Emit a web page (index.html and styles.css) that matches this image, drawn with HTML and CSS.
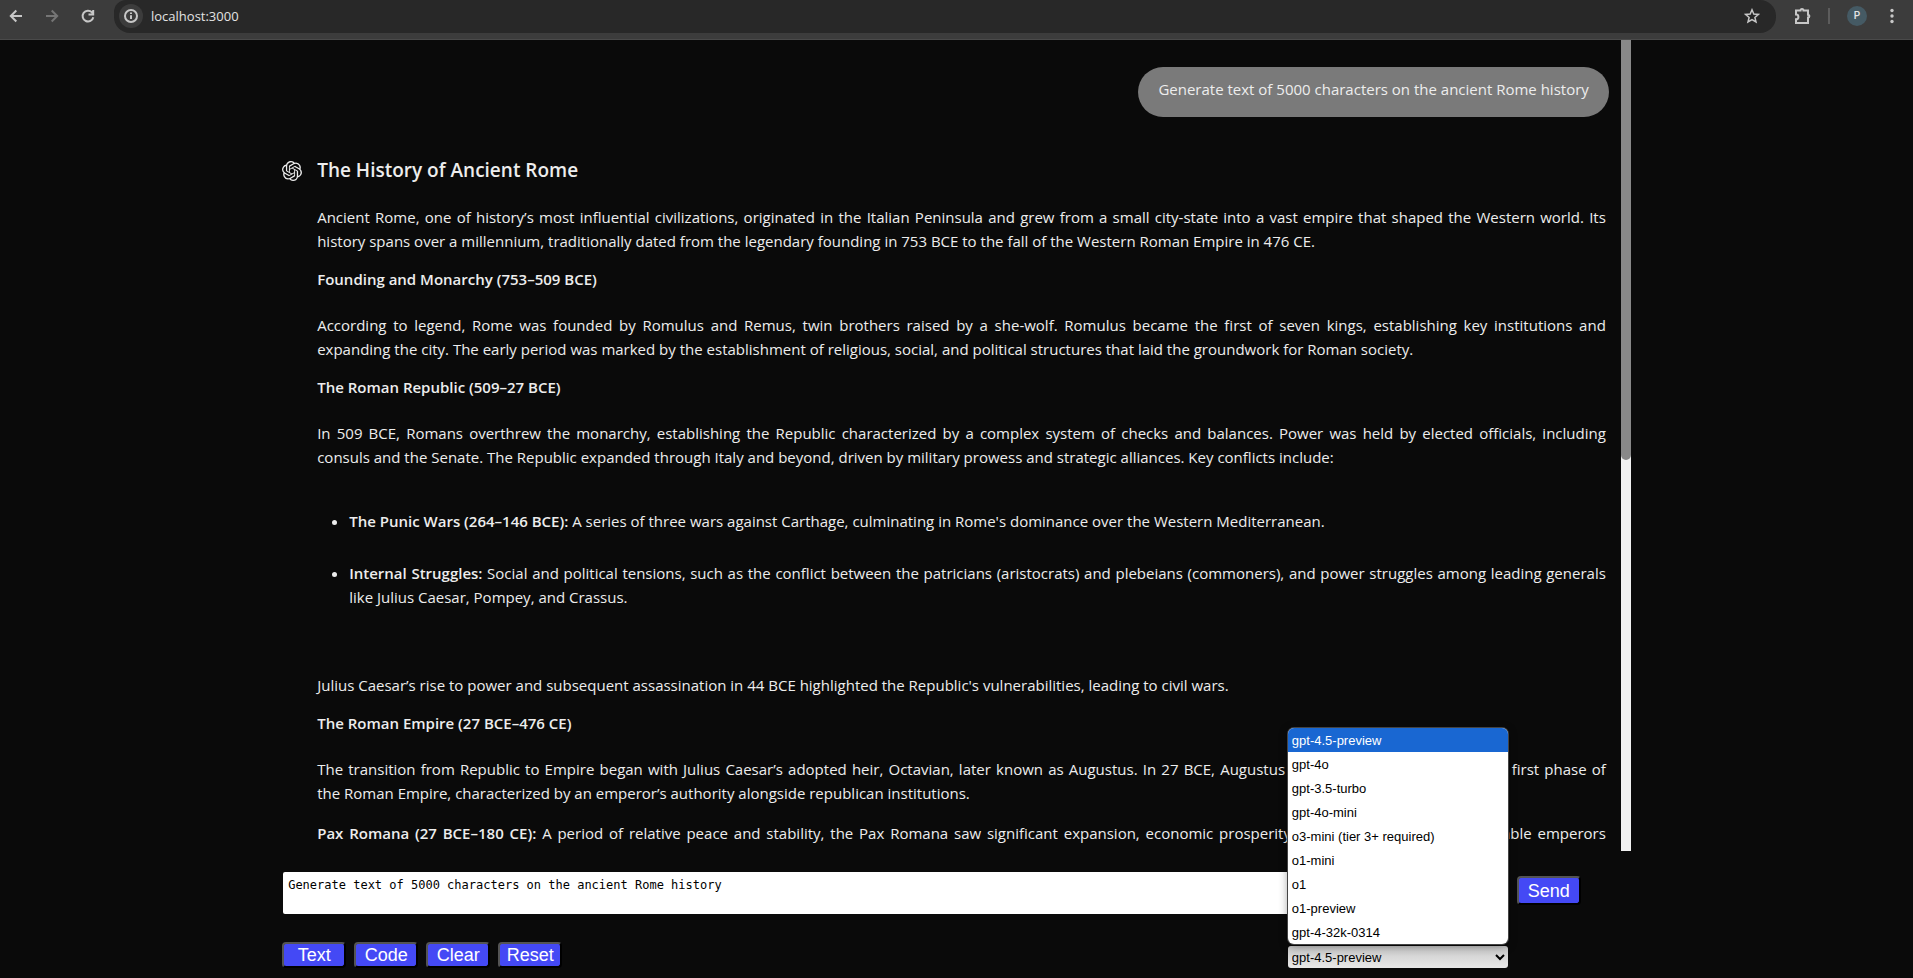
FILE: index.html
```html
<!DOCTYPE html>
<html lang="en">
<head>
<meta charset="utf-8">
<title>localhost:3000</title>
<link rel="stylesheet" href="styles.css">
</head>
<body>
<header class="toolbar">
  <nav class="nav-buttons" aria-label="Browser navigation">
    <button class="icon-button" aria-label="Back"><svg width="16" height="16" viewBox="0 0 16 16"><path d="M14 8H3M8.300 2.500 2.800 8l5.500 5.500"/></svg></button>
    <button class="icon-button disabled" aria-label="Forward" disabled><svg width="16" height="16" viewBox="0 0 16 16"><path d="M2 8h11M7.700 2.500 13.200 8l-5.500 5.500"/></svg></button>
    <button class="icon-button" aria-label="Reload"><svg width="16" height="16" viewBox="0 0 16 16"><path d="M13.300 9.200A5.400 5.400 0 1 1 12 4.400L13.200 6M13.200 2v4.500H8.500"/></svg></button>
  </nav>
  <div class="address-bar">
    <button class="site-info" aria-label="Site information"><svg width="16" height="16" viewBox="0 0 16 16"><circle cx="8" cy="8" r="6"/><path d="M8 7.200v3.800M8 4.600v1.500"/></svg></button>
    <input class="address" type="text" value="localhost:3000" aria-label="Address">
    <button class="icon-button" aria-label="Bookmark"><svg class="star" width="16" height="16" viewBox="0 0 16 16"><path d="M8 1.800 9.800 6l4.600.4-3.500 3 1.100 4.500L8 11.500l-4 2.400 1.100-4.500-3.500-3L6.200 6z"/></svg></button>
  </div>
  <div class="tools">
    <button class="icon-button" aria-label="Extensions"><svg width="18" height="18" viewBox="0 0 18 18"><path d="M3 3.500h4.500a1.500 1.500 0 0 1 3 0H15v4.300a1.300 1.300 0 0 1 0 2.700V16H3v-3.700a2.300 2.300 0 0 0 0-4.800z"/></svg></button>
    <span class="divider"></span>
    <button class="avatar" aria-label="Profile">P</button>
    <button class="icon-button" aria-label="Menu"><svg class="dots" width="16" height="16" viewBox="0 0 16 16"><circle cx="8" cy="2.500" r="1.700"/><circle cx="8" cy="8" r="1.700"/><circle cx="8" cy="13.500" r="1.700"/></svg></button>
  </div>
</header>
<main class="app">
  <section class="chat">
    <div class="messages">
      <div class="prompt">Generate text of 5000 characters on the ancient Rome history</div>
      <article class="answer">
        <svg class="logo" viewBox="0 0 24 24" width="20" height="20" aria-hidden="true"><path d="M22.282 9.821a5.985 5.985 0 0 0-.516-4.910 6.046 6.046 0 0 0-6.510-2.900A6.065 6.065 0 0 0 4.981 4.182a5.985 5.985 0 0 0-3.998 2.900 6.046 6.046 0 0 0 .743 7.097 5.980 5.980 0 0 0 .511 4.911 6.051 6.051 0 0 0 6.515 2.900A5.985 5.985 0 0 0 13.260 24a6.056 6.056 0 0 0 5.772-4.206 5.990 5.990 0 0 0 3.998-2.900 6.056 6.056 0 0 0-.748-7.073zm-9.022 12.608a4.476 4.476 0 0 1-2.876-1.041l.141-.080 4.779-2.758a.795.795 0 0 0 .393-.681v-6.737l2.020 1.169a.071.071 0 0 1 .038.052v5.583a4.504 4.504 0 0 1-4.495 4.493zM3.600 18.304a4.471 4.471 0 0 1-.535-3.014l.142.085 4.783 2.758a.771.771 0 0 0 .781 0l5.843-3.369v2.333a.080.080 0 0 1-.033.061L9.740 19.950a4.499 4.499 0 0 1-6.140-1.646zM2.341 7.896a4.485 4.485 0 0 1 2.366-1.973V11.600a.766.766 0 0 0 .388.676l5.815 3.355-2.020 1.169a.076.076 0 0 1-.071 0l-4.830-2.787A4.504 4.504 0 0 1 2.341 7.872zm16.597 3.856-5.833-3.388L15.119 7.200a.076.076 0 0 1 .071 0l4.830 2.791a4.494 4.494 0 0 1-.676 8.104v-5.677a.790.790 0 0 0-.406-.666zm2.010-3.024-.141-.085-4.774-2.782a.776.776 0 0 0-.785 0L9.409 9.230V6.897a.066.066 0 0 1 .028-.061l4.830-2.787a4.499 4.499 0 0 1 6.681 4.660zM8.307 12.863l-2.020-1.164a.080.080 0 0 1-.038-.057V6.075a4.499 4.499 0 0 1 7.376-3.453l-.142.080L8.704 5.460a.795.795 0 0 0-.393.681zm1.097-2.366 2.602-1.500 2.607 1.500v2.999l-2.597 1.500-2.607-1.500z"/></svg>
        <div class="content">
          <h1>The History of Ancient Rome</h1>
          <p>Ancient Rome, one of history’s most influential civilizations, originated in the Italian Peninsula and grew from a small city-state into a vast empire that shaped the Western world. Its history spans over a millennium, traditionally dated from the legendary founding in 753 BCE to the fall of the Western Roman Empire in 476 CE.</p>
          <h2>Founding and Monarchy (753–509 BCE)</h2>
          <p>According to legend, Rome was founded by Romulus and Remus, twin brothers raised by a she-wolf. Romulus became the first of seven kings, establishing key institutions and expanding the city. The early period was marked by the establishment of religious, social, and political structures that laid the groundwork for Roman society.</p>
          <h2>The Roman Republic (509–27 BCE)</h2>
          <p>In 509 BCE, Romans overthrew the monarchy, establishing the Republic characterized by a complex system of checks and balances. Power was held by elected officials, including consuls&nbsp;and the Senate. The Republic expanded through Italy and beyond, driven by military prowess and strategic alliances. Key conflicts include:</p>
          <ul>
            <li><strong>The Punic Wars (264–146 BCE):</strong> A series of three wars against Carthage, culminating in Rome's dominance over the Western Mediterranean.</li>
            <li><strong>Internal Struggles:</strong> Social and political tensions, such as the conflict between the patricians (aristocrats) and plebeians (commoners), and power struggles among leading generals like Julius Caesar, Pompey, and Crassus.</li>
          </ul>
          <p>Julius Caesar’s rise to power and subsequent assassination in 44 BCE highlighted the Republic's vulnerabilities, leading to civil wars.</p>
          <h2>The Roman Empire (27 BCE–476 CE)</h2>
          <p>The transition from Republic to Empire began with Julius Caesar’s adopted heir, Octavian, later known as Augustus. In 27 BCE, Augustus became emperor, marking the first phase of the&nbsp;Roman&nbsp;Empire, characterized by an emperor’s authority alongside republican institutions.</p>
          <p class="follow"><strong>Pax Romana (27 BCE–180 CE):</strong> A period of relative peace and stability, the Pax Romana saw significant expansion, economic prosperity, and cultural flourishing. Notable emperors</p>
        </div>
      </article>
    </div>
    <div class="scrollbar"><div class="thumb"></div></div>
  </section>
  <form class="composer">
    <textarea class="question" aria-label="Message">Generate text of 5000 characters on the ancient Rome history</textarea>
    <button class="action send" type="button">Send</button>
  </form>
  <div class="controls">
    <div class="modes">
      <button class="action">Text</button>
      <button class="action">Code</button>
      <button class="action">Clear</button>
      <button class="action">Reset</button>
    </div>
    <div class="model">
      <select class="model-select" aria-label="Model"><option>gpt-4.5-preview</option></select>
      <ul class="model-menu" role="listbox" aria-label="Models">
        <li role="option" aria-selected="true">gpt-4.5-preview</li>
        <li role="option">gpt-4o</li>
        <li role="option">gpt-3.5-turbo</li>
        <li role="option">gpt-4o-mini</li>
        <li role="option">o3-mini (tier 3+ required)</li>
        <li role="option">o1-mini</li>
        <li role="option">o1</li>
        <li role="option">o1-preview</li>
        <li role="option">gpt-4-32k-0314</li>
      </ul>
    </div>
  </div>
</main>
</body>
</html>
```
FILE: styles.css
```css
* { box-sizing: border-box; }
body {
  margin: 0;
  height: 100vh;
  display: flex;
  flex-direction: column;
  overflow: hidden;
  background: #0a0a0a;
  color: #ededed;
  font: 15px/24px "Open Sans", "Noto Sans", sans-serif;
}
button, input, select, textarea { font: inherit; margin: 0; }

/* Browser toolbar */
.toolbar {
  flex: none;
  display: flex;
  height: 40px;
  padding-left: 8px;
  background: #3c3c3c;
  border-bottom: 1px solid #4a4a4a;
}
.nav-buttons { display: flex; gap: 20px; height: 32px; align-items: center; }
.icon-button {
  display: flex;
  padding: 0;
  border: 0;
  background: none;
}
.toolbar svg { fill: none; stroke: #c7c7c7; stroke-width: 2; }
.toolbar .disabled svg { stroke: #757575; }
.toolbar .star { stroke-width: 1.5; }
.toolbar .dots { fill: #c7c7c7; stroke: none; }
.address-bar {
  flex: 1;
  display: flex;
  align-items: center;
  height: 33px;
  margin-left: 18px;
  padding: 0 16px 1px 5px;
  background: #282828;
  border-radius: 12px 16px 16px 16px;
}
.site-info {
  display: flex;
  padding: 4px;
  border: 0;
  border-radius: 50%;
  background: #3c3c3c;
}
.address {
  flex: 1;
  height: 24px;
  margin-left: 8px;
  padding: 0 0 1px;
  border: 0;
  background: none;
  color: #e3e3e3;
  font-size: 13px;
}
.tools {
  display: flex;
  align-items: center;
  gap: 17px;
  height: 32px;
  padding: 0 13px 0 17px;
}
.divider { width: 2px; height: 16px; background: #5c5c5c; }
.avatar {
  width: 20px;
  height: 20px;
  padding: 0;
  border: 0;
  border-radius: 50%;
  background: #455a64;
  color: #e3e3e3;
  font: 500 10px/20px Roboto, sans-serif;
}

/* Chat column */
.app {
  flex: 1;
  min-height: 0;
  display: flex;
  flex-direction: column;
  width: 70.5%;
  margin: 0 auto;
  padding-bottom: 10px;
}
.chat { flex: 1; min-height: 0; display: flex; gap: 12px; }
.messages {
  flex: 1;
  display: flex;
  flex-direction: column;
  overflow: hidden;
  padding-top: 27px;
}
.prompt {
  align-self: flex-end;
  padding: 10px 20px 16px;
  border-radius: 25px;
  background: #7a7a7a;
}
.answer { display: flex; gap: 15px; margin-top: 37px; padding-right: 3px; }
.logo { flex: none; margin-top: 7px; fill: #ededed; }
.content { flex: 1; text-align: justify; }
h1 { margin: 0 0 19px; font-size: 19px; line-height: 32px; font-weight: 600; }
h2 { margin: 14px 0 22px; font-size: 15px; line-height: 24px; font-weight: 600; }
p { margin: 0; }
strong { font-weight: 600; }
.content ul { margin: 40px 0 64px; padding-left: 32px; }
.content li + li { margin-top: 28px; }
.follow { margin-top: 16px; text-align-last: justify; }
.scrollbar { width: 10px; background: #f1f1f1; }
.thumb { height: 51.8%; border-radius: 0 0 5px 5px; background: #888; }

/* Composer */
.composer {
  display: flex;
  align-items: flex-start;
  gap: 9px;
  margin-top: 21px;
  padding: 0 50px 0 1px;
}
.question {
  flex: 1;
  height: 42px;
  padding: 4px 5px;
  border: 0;
  border-radius: 2px;
  background: #fff;
  color: #000;
  font: 12px/18px "DejaVu Sans Mono", monospace;
  resize: none;
}
.action {
  width: 64px;
  height: 26px;
  padding: 0;
  border: 2px outset #000;
  border-radius: 4px;
  background: #4449f5;
  color: #fff;
  font: 18px/20px "Liberation Sans", sans-serif;
}
.send { height: 29px; margin-top: 4px; }
.controls {
  display: flex;
  justify-content: space-between;
  margin-top: 28px;
  padding-right: 123px;
}
.modes { display: flex; gap: 8px; }
.model {
  position: relative;
  width: 220px;
  margin-top: 4px;
  font: 13px/24px "Liberation Sans", sans-serif;
}
.model-select {
  display: block;
  width: 100%;
  height: 22px;
  padding: 0;
  border: 0;
  border-radius: 3px;
  background: linear-gradient(#c8c8c8, #e8e8e8);
  color: #000;
}
.model-menu {
  position: absolute;
  left: 0;
  bottom: 24px;
  width: 100%;
  margin: 0;
  padding: 0;
  overflow: hidden;
  border-radius: 6px;
  background: #fff;
  color: #000;
  list-style: none;
  box-shadow: 0 0 0 1px #444, 0 2px 10px #0006;
}
.model-menu li { padding: 2px 4px 0; line-height: 22px; }
.model-menu [aria-selected] { background: #1967d2; color: #fff; }
```
